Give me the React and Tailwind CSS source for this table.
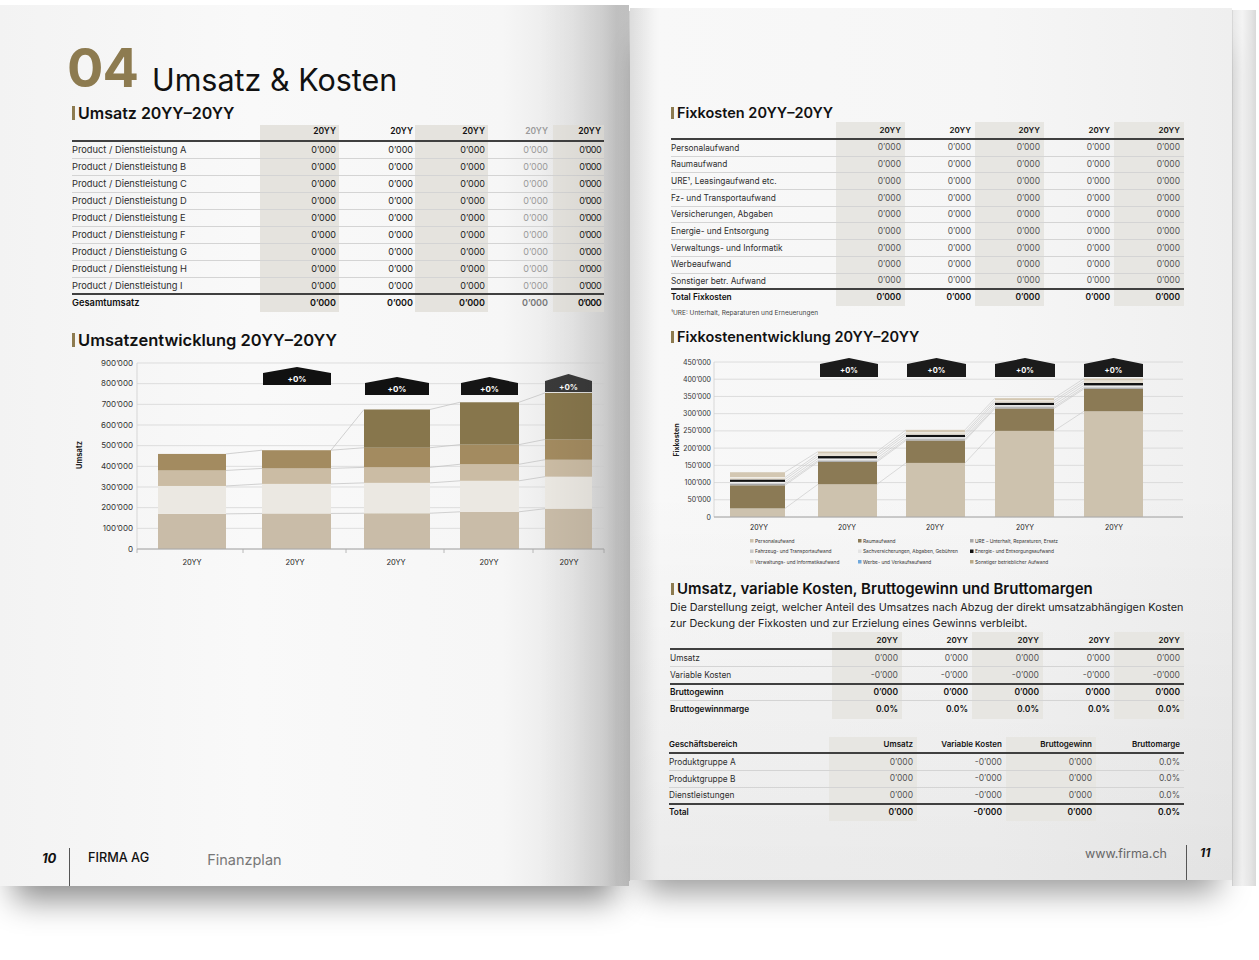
import React from "react";

const FONT = "Inter, 'Liberation Sans', sans-serif";

function Title({ children, cls, barCls }) {
  return (
    <div className={`flex items-center ${cls}`}>
      <span className={`w-[3px] bg-[#8d7b50] mr-[3px] shrink-0 ${barCls}`} />
      <span className="font-semibold whitespace-nowrap text-[#111]">{children}</span>
    </div>
  );
}

function border(r) {
  if (r.border === "thick") return "border-b-2 border-[#404040]";
  if (r.border === "none") return "";
  return "border-b border-[#d4d4d4]";
}

function Table({ labelW, labelHeader, headers, cols, rows, headH, padT, padB, shade, headCls, labelCls, valCls }) {
  return (
    <div className="flex">
      <div className={`${labelW} ${padT} ${padB} flex flex-col shrink-0`}>
        <div className={`${headH} border-b-2 border-[#404040] flex items-end pb-[2px] whitespace-nowrap text-[#111] ${headCls}`}>{labelHeader}</div>
        {rows.map((r, i) => (
          <div key={i} className={`${r.h} ${border(r)} flex items-center whitespace-nowrap ${labelCls} ${r.bold ? "font-semibold text-[#111]" : "text-[#2e2e2e]"}`}>
            {r.label}
          </div>
        ))}
      </div>
      {cols.map((c, ci) => (
        <div key={ci} className={`${c.w} ${padT} ${padB} flex flex-col shrink-0 ${c.shaded ? shade : ""}`}>
          <div className={`${headH} border-b-2 border-[#404040] flex items-end pb-[2px] justify-end whitespace-nowrap ${c.pr} ${headCls} ${c.head}`}>{headers[ci]}</div>
          {rows.map((r, i) => (
            <div key={i} className={`${r.h} ${border(r)} flex items-center justify-end whitespace-nowrap ${c.pr} ${valCls} ${c.extra || ""} ${r.bold ? `font-semibold ${c.bold}` : c.text}`}>
              {r.values[ci]}
            </div>
          ))}
        </div>
      ))}
    </div>
  );
}

function LeftChart() {
  const Y = (v) => 197 - v * 0.20667;
  const colors = ["#c9bca8", "#ebe8e2", "#cbbca4", "#a38b60", "#87764c"];
  const bars = [
    { x1: 88, x2: 156, tops: [170, 305, 380, 460] },
    { x1: 192, x2: 261, tops: [172, 315, 390, 478] },
    { x1: 294, x2: 360, tops: [173, 320, 395, 490, 675] },
    { x1: 390, x2: 449, tops: [180, 330, 410, 505, 710] },
    { x1: 475, x2: 522, tops: [195, 350, 432, 530, 755] },
  ];
  const grid = [0, 100, 200, 300, 400, 500, 600, 700, 800, 900];
  const badges = [
    { x1: 193, x2: 261, p: 15, s: 21, b: 33, fill: "#111" },
    { x1: 295, x2: 359, p: 25, s: 31, b: 43, fill: "#111" },
    { x1: 391, x2: 448, p: 25, s: 31, b: 43, fill: "#151515" },
    { x1: 475, x2: 522, p: 22, s: 29, b: 40, fill: "#3a3a3a" },
  ];
  const lines = [];
  for (let i = 0; i < bars.length - 1; i++) {
    const a = bars[i], b = bars[i + 1];
    const n = Math.min(a.tops.length, b.tops.length);
    for (let j = 0; j < n; j++) lines.push([a.x2, Y(a.tops[j]), b.x1, Y(b.tops[j])]);
    if (a.tops.length !== b.tops.length) lines.push([a.x2, Y(a.tops[a.tops.length - 1]), b.x1, Y(b.tops[b.tops.length - 1])]);
  }
  return (
    <svg width="540" height="222" className="block -ml-[2px] mt-[2px]" fontFamily={FONT}>
      {grid.map((v) => (
        <g key={v}>
          <line x1="67" x2="534" y1={Y(v)} y2={Y(v)} stroke="#d6d6d6" strokeWidth="0.8" />
          <text x="63" y={Y(v) + 2.8} fontSize="8" textAnchor="end" fill="#333">
            {v === 0 ? "0" : `${v}’000`}
          </text>
        </g>
      ))}
      <line x1="67" x2="67" y1={Y(900)} y2={Y(0)} stroke="#cfcfcf" strokeWidth="0.8" />
      {lines.map((l, i) => (
        <line key={i} x1={l[0]} y1={l[1]} x2={l[2]} y2={l[3]} stroke="#bfbfbf" strokeWidth="0.7" />
      ))}
      {bars.map((b, i) =>
        b.tops.map((t, j) => {
          const prev = j === 0 ? 0 : b.tops[j - 1];
          return <rect key={`${i}-${j}`} x={b.x1} width={b.x2 - b.x1} y={Y(t)} height={Y(prev) - Y(t)} fill={colors[j]} />;
        })
      )}
      <line x1="67" x2="534" y1={Y(0)} y2={Y(0)} stroke="#a8a8a8" strokeWidth="1" />
      {[67, 173, 276, 374, 463, 534].map((x) => (
        <line key={x} x1={x} x2={x} y1={Y(0)} y2={Y(0) + 4} stroke="#a8a8a8" strokeWidth="0.8" />
      ))}
      {badges.map((g, i) => (
        <g key={i}>
          <polygon
            points={`${g.x1},${g.s} ${(g.x1 + g.x2) / 2},${g.p} ${g.x2},${g.s} ${g.x2},${g.b} ${g.x1},${g.b}`}
            fill={g.fill}
          />
          <text x={(g.x1 + g.x2) / 2} y={(g.s + g.b) / 2 + 3} fontSize="8" fontWeight="700" fill="#fff" textAnchor="middle">
            +0%
          </text>
        </g>
      ))}
      {[122, 225, 326, 419, 499].map((x, i) => (
        <text key={i} x={x} y="213" fontSize="7.5" textAnchor="middle" fill="#222">
          20YY
        </text>
      ))}
      <text x="12" y="103" fontSize="7.5" fontWeight="700" fill="#222" textAnchor="middle" transform="rotate(-90 12 103)">
        Umsatz
      </text>
    </svg>
  );
}

function RightChart() {
  const Y = (v) => 165 - v * 0.34444;
  const segColors = ["#cdc2ae", "#8b7a55", "#a8a8a8", "#d2d2d2", "#f2f2f2", "#111111", "#e6dfd2", "#fbfbfb", "#d3c7b2"];
  const raw = [
    { x1: 59, x2: 114, v: [25, 67, 4, 3, 3, 7, 6, 1, 14] },
    { x1: 147, x2: 206, v: [95, 65, 4, 3, 3, 7, 6, 1, 6] },
    { x1: 235, x2: 294, v: [157, 65, 4, 3, 3, 7, 6, 1, 7] },
    { x1: 324, x2: 383, v: [250, 65, 4, 3, 3, 7, 6, 1, 6] },
    { x1: 413, x2: 472, v: [307, 65, 4, 3, 3, 7, 6, 1, 6] },
  ];
  const bars = raw.map((b) => {
    let acc = 0;
    const tops = b.v.map((x) => (acc += x));
    return { ...b, tops };
  });
  const grid = [0, 50, 100, 150, 200, 250, 300, 350, 400, 450];
  const lines = [];
  for (let i = 0; i < bars.length - 1; i++) {
    const a = bars[i], b = bars[i + 1];
    [0, 1, 2, 4, 5, 6, 8].forEach((j) => lines.push([a.x2, Y(a.tops[j]), b.x1, Y(b.tops[j])]));
  }
  const badges = [
    [149, 207],
    [236, 295],
    [324, 384],
    [413, 472],
  ];
  const legend = [
    [79, 189, "#cdc2ae", "Personalaufwand"],
    [187, 189, "#8b7a55", "Raumaufwand"],
    [299, 189, "#a8a8a8", "URE – Unterhalt, Reparaturen, Ersatz"],
    [79, 199.5, "#c8c8c8", "Fahrzeug- und Transportaufwand"],
    [187, 199.5, "#e4e4e4", "Sachversicherungen, Abgaben, Gebühren"],
    [299, 199.5, "#111111", "Energie- und Entsorgungsaufwand"],
    [79, 210, "#ddd3c2", "Verwaltungs- und Informatikaufwand"],
    [187, 210, "#6fa8dc", "Werbe- und Verkaufsaufwand"],
    [299, 210, "#b9a987", "Sonstiger betrieblicher Aufwand"],
  ];
  return (
    <svg width="520" height="218" className="block mt-[6px]" fontFamily={FONT}>
      {grid.map((v) => (
        <g key={v}>
          <line x1="43" x2="512" y1={Y(v)} y2={Y(v)} stroke="#d6d6d6" strokeWidth="0.8" />
          <text x="40" y={Y(v) + 2.5} fontSize="7" textAnchor="end" fill="#333">
            {v === 0 ? "0" : `${v}’000`}
          </text>
        </g>
      ))}
      <line x1="43" x2="43" y1={Y(450)} y2={Y(0)} stroke="#cfcfcf" strokeWidth="0.8" />
      {lines.map((l, i) => (
        <line key={i} x1={l[0]} y1={l[1]} x2={l[2]} y2={l[3]} stroke="#c4c4c4" strokeWidth="0.6" />
      ))}
      {bars.map((b, i) =>
        b.tops.map((t, j) => {
          const prev = j === 0 ? 0 : b.tops[j - 1];
          return <rect key={`${i}-${j}`} x={b.x1} width={b.x2 - b.x1} y={Y(t)} height={Y(prev) - Y(t)} fill={segColors[j]} />;
        })
      )}
      <line x1="43" x2="512" y1={Y(0)} y2={Y(0)} stroke="#a8a8a8" strokeWidth="1" />
      {badges.map((g, i) => (
        <g key={i}>
          <polygon points={`${g[0]},12 ${(g[0] + g[1]) / 2},6 ${g[1]},12 ${g[1]},25 ${g[0]},25`} fill="#1b1b1b" />
          <text x={(g[0] + g[1]) / 2} y="21" fontSize="7.5" fontWeight="700" fill="#fff" textAnchor="middle">
            +0%
          </text>
        </g>
      ))}
      {[88, 176, 264, 354, 443].map((x, i) => (
        <text key={i} x={x} y="177.5" fontSize="7" textAnchor="middle" fill="#222">
          20YY
        </text>
      ))}
      {legend.map((l, i) => (
        <g key={i}>
          <rect x={l[0]} y={l[1] - 2} width="3.5" height="3.5" fill={l[2]} />
          <text x={l[0] + 5} y={l[1] + 1.6} fontSize="4.8" fill="#333">
            {l[3]}
          </text>
        </g>
      ))}
      <text x="8" y="88" fontSize="7" fontWeight="700" fill="#222" textAnchor="middle" transform="rotate(-90 8 88)">
        Fixkosten
      </text>
    </svg>
  );
}

const Z = "0’000";

const DK = { head: "text-[#111]", text: "text-[#222]", bold: "text-[#111]" };
const MD = { head: "text-[#111]", text: "text-[#555]", bold: "text-[#111]" };
const LT = { head: "text-[#9a9a9a]", text: "text-[#9a9a9a]", bold: "text-[#777]" };

function LeftPage() {
  const letters = ["A", "B", "C", "D", "E", "F", "G", "H", "I"];
  const rows = letters.map((L, i) => ({
    label: `Product / Dienstleistung ${L}`,
    values: [Z, Z, Z, Z, Z],
    h: "h-[17px]",
    border: i === 8 ? "thick" : "thin",
  }));
  rows.push({ label: "Gesamtumsatz", values: [Z, Z, Z, Z, Z], h: "h-[15px]", border: "none", bold: true });
  const cols = [
    { w: "w-[79px]", shaded: true, pr: "pr-[3px]", ...DK },
    { w: "w-[76px]", shaded: false, pr: "pr-[2px]", ...DK },
    { w: "w-[73px]", shaded: true, pr: "pr-[3px]", ...DK },
    { w: "w-[65px]", shaded: false, pr: "pr-[5px]", ...LT },
    { w: "w-[51px]", shaded: true, pr: "pr-[3px]", extra: "tracking-[-0.6px]", ...DK },
  ];
  return (
    <div className="relative w-[629px] h-[881px] shrink-0 flex flex-col bg-[linear-gradient(to_right,#f3f3f3_0%,#f9f9f9_40%,#f6f6f6_80%,#e8e8e8_91%,#d4d4d4_98%,#dcdcdc_100%)] shadow-[0_28px_30px_-14px_rgba(0,0,0,0.45)]">
      <div className="pl-[72px] pt-[36px] flex flex-col">
        <div className="flex items-end -ml-[5px]">
          <span className="text-[54px] leading-none font-bold text-[#8d7b50] tracking-[-1px]">04</span>
          <span className="ml-[14px] text-[30.5px] leading-none text-[#111]">Umsatz &amp; Kosten</span>
        </div>
        <Title cls="mt-[8px] text-[16px] leading-[20px]" barCls="h-[14px]">
          Umsatz 20YY–20YY
        </Title>
        <div className="mt-[2px]">
          <Table
            labelW="w-[188px]"
            labelHeader=""
            headers={["20YY", "20YY", "20YY", "20YY", "20YY"]}
            cols={cols}
            rows={rows}
            headH="h-[15px]"
            padT="pt-[2px]"
            padB="pb-[2px]"
            shade="bg-[#e5e3de]"
            headCls="text-[8.5px] font-semibold"
            labelCls="text-[9.3px]"
            valCls="text-[9px]"
          />
        </div>
        <Title cls="mt-[18px] text-[16.5px] leading-[20px]" barCls="h-[14px]">
          Umsatzentwicklung 20YY–20YY
        </Title>
        <LeftChart />
      </div>
      <div className="mt-auto h-[38px] flex pl-[42px]">
        <span className="pt-[3px] text-[13px] leading-[14px] font-bold italic text-[#111] w-[14px]">10</span>
        <span className="ml-[13px] w-px self-stretch bg-[#555]" />
        <span className="ml-[18px] pt-[3px] text-[12.7px] leading-[14px] font-medium text-[#111]">FIRMA AG</span>
        <span className="ml-[58px] pt-[5px] text-[14.5px] leading-[14px] text-[#777]">Finanzplan</span>
      </div>
      <div className="pointer-events-none absolute right-0 top-0 bottom-0 w-[90px] bg-[linear-gradient(to_right,rgba(0,0,0,0)_0%,rgba(0,0,0,0.06)_70%,rgba(0,0,0,0.13)_100%)]" />
    </div>
  );
}

function RightPage() {
  const fixLabels = [
    "Personalaufwand",
    "Raumaufwand",
    "URE¹, Leasingaufwand etc.",
    "Fz- und Transportaufwand",
    "Versicherungen, Abgaben",
    "Energie- und Entsorgung",
    "Verwaltungs- und Informatik",
    "Werbeaufwand",
    "Sonstiger betr. Aufwand",
  ];
  const fixRows = fixLabels.map((l, i) => ({
    label: l,
    values: [Z, Z, Z, Z, Z],
    h: "h-[16.7px]",
    border: i === 8 ? "thick" : "thin",
  }));
  fixRows.push({ label: "Total Fixkosten", values: [Z, Z, Z, Z, Z], h: "h-[15px]", border: "none", bold: true });
  const fixCols = [
    { w: "w-[69px]", shaded: true, pr: "pr-[4px]", ...MD },
    { w: "w-[70px]", shaded: false, pr: "pr-[4px]", ...MD },
    { w: "w-[69px]", shaded: true, pr: "pr-[4px]", ...MD },
    { w: "w-[70px]", shaded: false, pr: "pr-[4px]", ...MD },
    { w: "w-[70px]", shaded: true, pr: "pr-[4px]", ...MD },
  ];
  const bgRows = [
    { label: "Umsatz", values: [Z, Z, Z, Z, Z], h: "h-[17px]", border: "thin" },
    { label: "Variable Kosten", values: ["-0’000", "-0’000", "-0’000", "-0’000", "-0’000"], h: "h-[18px]", border: "thick" },
    { label: "Bruttogewinn", values: [Z, Z, Z, Z, Z], h: "h-[16px]", border: "thin", bold: true },
    { label: "Bruttogewinnmarge", values: ["0.0%", "0.0%", "0.0%", "0.0%", "0.0%"], h: "h-[17px]", border: "none", bold: true },
  ];
  const bgCols = [
    { w: "w-[70px]", shaded: true, pr: "pr-[4px]", ...MD },
    { w: "w-[70px]", shaded: false, pr: "pr-[4px]", ...MD },
    { w: "w-[71px]", shaded: true, pr: "pr-[4px]", ...MD },
    { w: "w-[71px]", shaded: false, pr: "pr-[4px]", ...MD },
    { w: "w-[70px]", shaded: true, pr: "pr-[4px]", ...MD },
  ];
  const gbRows = [
    { label: "Produktgruppe A", values: [Z, "-0’000", Z, "0.0%"], h: "h-[16.7px]", border: "thin" },
    { label: "Produktgruppe B", values: [Z, "-0’000", Z, "0.0%"], h: "h-[16.7px]", border: "thin" },
    { label: "Dienstleistungen", values: [Z, "-0’000", Z, "0.0%"], h: "h-[17px]", border: "thick" },
    { label: "Total", values: [Z, "-0’000", Z, "0.0%"], h: "h-[15px]", border: "none", bold: true },
  ];
  const gbCols = [
    { w: "w-[88px]", shaded: true, pr: "pr-[4px]", ...MD },
    { w: "w-[89px]", shaded: false, pr: "pr-[4px]", ...MD },
    { w: "w-[90px]", shaded: true, pr: "pr-[4px]", ...MD },
    { w: "w-[88px]", shaded: false, pr: "pr-[4px]", ...MD },
  ];
  return (
    <div className="relative w-[602px] h-[872px] mt-[3px] shrink-0 flex flex-col bg-[linear-gradient(to_bottom,rgba(0,0,0,0)_55%,rgba(0,0,0,0.05)_100%),linear-gradient(to_right,#ededed_0%,#f8f8f8_4%,#f6f6f6_60%,#efefef_100%)] shadow-[0_26px_30px_-14px_rgba(0,0,0,0.4)]">
      <div className="pl-[41px] pt-[96px] flex flex-col">
        <Title cls="text-[14.5px] leading-[18px]" barCls="h-[12px]">
          Fixkosten 20YY–20YY
        </Title>
        <Table
          labelW="w-[165px]"
          labelHeader=""
          headers={["20YY", "20YY", "20YY", "20YY", "20YY"]}
          cols={fixCols}
          rows={fixRows}
          headH="h-[16px]"
          padT="pt-[2px]"
          padB="pb-[1px]"
          shade="bg-[#e7e6e2]"
          headCls="text-[8px] font-semibold"
          labelCls="text-[8.3px]"
          valCls="text-[8.5px]"
        />
        <div className="mt-[2px] text-[6.5px] leading-[10px] text-[#444] whitespace-nowrap">¹URE: Unterhalt, Reparaturen und Erneuerungen</div>
        <Title cls="mt-[10px] text-[14.5px] leading-[18px]" barCls="h-[12px]">
          Fixkostenentwicklung 20YY–20YY
        </Title>
        <RightChart />
        <Title cls="mt-[10px] text-[15px] leading-[18px]" barCls="h-[12px]">
          Umsatz, variable Kosten, Bruttogewinn und Bruttomargen
        </Title>
        <div className="-ml-[1px] mt-[2px] text-[10.8px] leading-[16px] text-[#222] whitespace-nowrap">
          <div>Die Darstellung zeigt, welcher Anteil des Umsatzes nach Abzug der direkt umsatzabhängigen Kosten</div>
          <div>zur Deckung der Fixkosten und zur Erzielung eines Gewinns verbleibt.</div>
        </div>
        <div className="-ml-[1px]">
          <Table
            labelW="w-[162px]"
            labelHeader=""
            headers={["20YY", "20YY", "20YY", "20YY", "20YY"]}
            cols={bgCols}
            rows={bgRows}
            headH="h-[17px]"
            padT="pt-[1px]"
            padB="pb-[1px]"
            shade="bg-[#e7e6e2]"
            headCls="text-[8px] font-semibold"
            labelCls="text-[8.3px]"
            valCls="text-[8.5px]"
          />
        </div>
        <div className="-ml-[2px] mt-[18px]">
          <Table
            labelW="w-[160px]"
            labelHeader="Geschäftsbereich"
            headers={["Umsatz", "Variable Kosten", "Bruttogewinn", "Bruttomarge"]}
            cols={gbCols}
            rows={gbRows}
            headH="h-[16px]"
            padT="pt-[1px]"
            padB="pb-[1px]"
            shade="bg-[#e7e6e2]"
            headCls="text-[8px] font-semibold"
            labelCls="text-[8.3px]"
            valCls="text-[8.5px]"
          />
        </div>
      </div>
      <div className="mt-auto h-[35px] flex justify-end pr-[22px]">
        <span className="pt-[2px] text-[12.5px] leading-[14px] text-[#666]">www.firma.ch</span>
        <span className="ml-[19px] w-px self-stretch bg-[#555]" />
        <span className="ml-[13px] pt-[1px] text-[12px] leading-[14px] font-bold italic text-[#111] w-[10px]">11</span>
      </div>
      <div className="pointer-events-none absolute left-0 top-0 bottom-0 w-[30px] bg-[linear-gradient(to_right,rgba(0,0,0,0.07),rgba(0,0,0,0))]" />
    </div>
  );
}

export default function App() {
  return (
    <div className="w-[1259px] h-[960px] bg-white overflow-hidden font-['Inter','Liberation_Sans',sans-serif] text-[#1a1a1a]">
      <div className="flex items-start pt-[5px]">
        <LeftPage />
        <div className="w-px h-[870px] mt-[6px] bg-[#d0d0d0] shrink-0" />
        <RightPage />
        <div className="w-[24px] h-[876px] mt-[5px] shrink-0 border-l border-[#d8d8d8] bg-[linear-gradient(to_right,#e9e9e9,#f4f4f4_40%,#e4e4e4_80%,#d9d9d9)] shadow-[0_22px_26px_-14px_rgba(0,0,0,0.35)]" />
      </div>
    </div>
  );
}
